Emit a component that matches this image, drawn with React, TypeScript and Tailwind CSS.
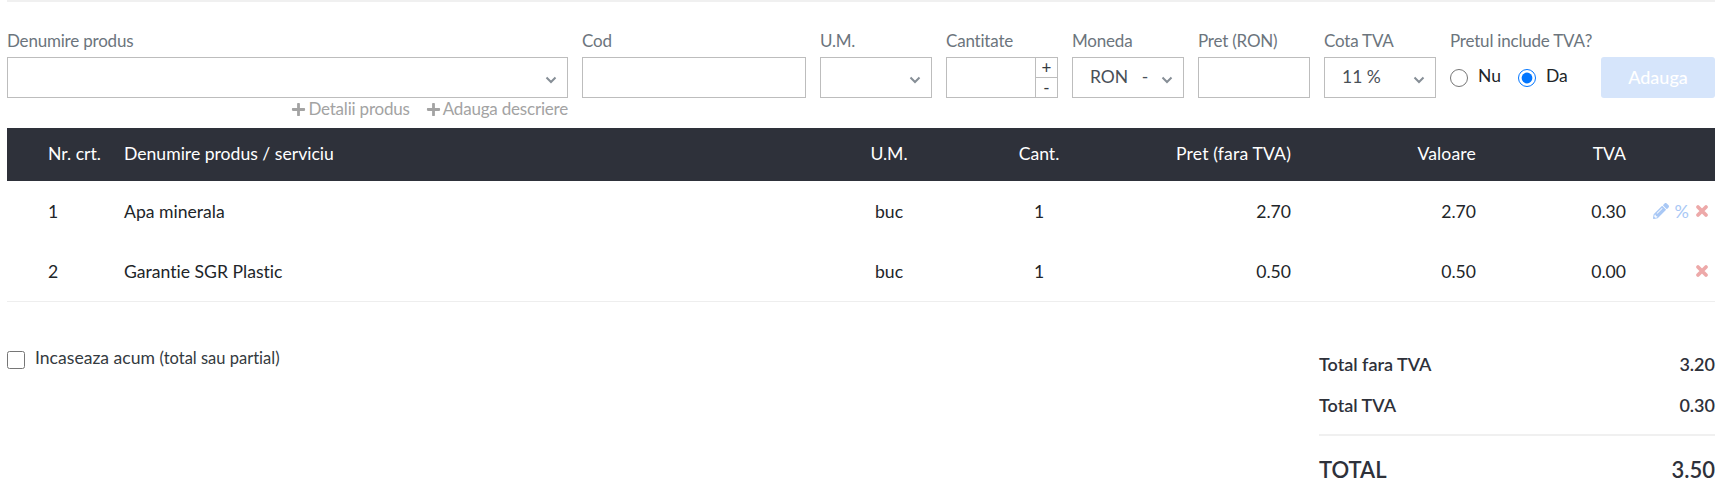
import { FaPencilAlt, FaPlus } from "react-icons/fa";

const rows = [
  { nr: 1, name: "Apa minerala", um: "buc", qty: 1, price: "2.70", value: "2.70", vat: "0.30", editable: true },
  { nr: 2, name: "Garantie SGR Plastic", um: "buc", qty: 1, price: "0.50", value: "0.50", vat: "0.00", editable: false },
];

const gridCols = "grid grid-cols-[117px_690px_150px_150px_177px_185px_150px_89px] items-center";

function Chevron() {
  return (
    <svg width="12" height="8" viewBox="0 0 12 8" className="shrink-0 translate-y-[2px] text-[#868e96]">
      <path d="M1.500 1.500 6 6l4.500-4.500" fill="none" stroke="currentColor" strokeWidth="2" />
    </svg>
  );
}

function Label({ children }: { children: React.ReactNode }) {
  return (
    <div className="mb-[4px] h-[24px] whitespace-nowrap text-[17px] leading-[24px] tracking-[-0.2px] text-[#6c757d]">
      {children}
    </div>
  );
}

function SelectBox({ value }: { value?: string }) {
  return (
    <div className="flex h-[41px] items-center justify-between border border-[#bdbdbd] pl-[17px] pr-[10px] text-[17.500px] text-[#495057]">
      <span className="whitespace-pre">{value}</span>
      <Chevron />
    </div>
  );
}

function TextBox() {
  return <input className="block h-[41px] w-full border border-[#bdbdbd] bg-white px-3 text-[16px] outline-none" />;
}

function Radio({ label, checked }: { label: string; checked?: boolean }) {
  return (
    <label className="flex items-center gap-[10px] text-[17.500px] leading-[24px] text-[#212529]">
      <input type="radio" name="vat" defaultChecked={checked} className="m-0 h-[18px] w-[18px]" />
      <span className="-translate-y-[2px]">{label}</span>
    </label>
  );
}

function AddLink({ label }: { label: string }) {
  return (
    <span className="flex items-center gap-[2px]">
      <FaPlus className="text-[15px]" />
      {label}
    </span>
  );
}

function CloseIcon() {
  return (
    <svg width="14" height="14" viewBox="0 0 14 14" className="text-[#eda9a9]">
      <path d="M3 3l8 8M11 3l-8 8" fill="none" stroke="currentColor" strokeWidth="3.800" strokeLinecap="round" />
    </svg>
  );
}

export default function App() {
  return (
    <div className="h-[492px] w-[1726px] overflow-hidden bg-white pl-[7px] pr-[11px] font-['Lato',sans-serif] text-[#212529] [font-variant-ligatures:none]">
      <div className="h-[2px] bg-[#f0f0f0]" />

      <div className="mt-[27px] flex gap-[14px]">
        <div className="w-[561px]">
          <Label>Denumire produs</Label>
          <SelectBox />
          <div className="flex h-[22px] items-center justify-end gap-[16px] text-[17px] tracking-[-0.2px] text-[#a3a3a3]">
            <AddLink label="Detalii produs" />
            <AddLink label="Adauga descriere" />
          </div>
        </div>
        <div className="w-[224px]">
          <Label>Cod</Label>
          <TextBox />
        </div>
        <div className="w-[112px]">
          <Label>U.M.</Label>
          <SelectBox />
        </div>
        <div className="w-[112px]">
          <Label>Cantitate</Label>
          <div className="flex h-[41px] border border-[#bdbdbd]">
            <input className="min-w-0 flex-1 bg-white outline-none" />
            <div className="flex w-[22px] flex-col border-l border-[#bdbdbd] text-center text-[17px] leading-[19px] text-[#343a40]">
              <span className="h-[20px] border-b border-[#bdbdbd]">+</span>
              <span className="flex-1">-</span>
            </div>
          </div>
        </div>
        <div className="w-[112px]">
          <Label>Moneda</Label>
          <SelectBox value="RON   -" />
        </div>
        <div className="w-[112px]">
          <Label>Pret (RON)</Label>
          <TextBox />
        </div>
        <div className="w-[112px]">
          <Label>Cota TVA</Label>
          <SelectBox value="11 %" />
        </div>
        <div className="w-[137px]">
          <Label>Pretul include TVA?</Label>
          <div className="flex h-[41px] items-center gap-[17px]">
            <Radio label="Nu" />
            <Radio label="Da" checked />
          </div>
        </div>
        <div className="w-[114px] pt-[28px]">
          <button className="h-[41px] w-full rounded-[3px] bg-[#d6e5fb] text-[18px] font-medium text-white">Adauga</button>
        </div>
      </div>

      <div className={`${gridCols} mt-[8px] h-[53px] bg-[#2e313a] text-[17.600px] text-white`}>
        <div className="pl-[41px]">Nr. crt.</div>
        <div>Denumire produs / serviciu</div>
        <div className="text-center">U.M.</div>
        <div className="text-center">Cant.</div>
        <div className="text-right tracking-[0.15px]">Pret (fara TVA)</div>
        <div className="text-right tracking-[0.15px]">Valoare</div>
        <div className="text-right">TVA</div>
        <div />
      </div>

      <div className="border-b border-[#eeeeee]">
        {rows.map((r) => (
          <div key={r.nr} className={`${gridCols} h-[60px] pt-[2px] text-[17.600px]`}>
            <div className="pl-[41px]">{r.nr}</div>
            <div>{r.name}</div>
            <div className="text-center">{r.um}</div>
            <div className="text-center">{r.qty}</div>
            <div className="text-right">{r.price}</div>
            <div className="text-right">{r.value}</div>
            <div className="text-right">{r.vat}</div>
            <div className="flex -translate-y-[1px] items-center justify-end gap-[6px] pr-[6px]">
              {r.editable && (
                <>
                  <FaPencilAlt className="text-[16px] text-[#a9c8f5]" />
                  <span className="text-[18px] leading-none text-[#a9c8f5]">%</span>
                </>
              )}
              <CloseIcon />
            </div>
          </div>
        ))}
      </div>

      <div className="mt-[45px] flex items-start justify-between">
        <label className="flex items-center gap-[10px] text-[17.600px] text-[#343a40]">
          <input type="checkbox" className="m-0 h-[18px] w-[18px]" />
          <span className="-translate-y-[2px]">
            Incaseaza acum <span className="text-[16.500px]">(total sau partial)</span>
          </span>
        </label>
        <div className="-mt-[3px] w-[396px] text-[#2e313a]">
          <div className="flex h-[41px] items-center justify-between text-[18px] font-semibold">
            <span>Total fara TVA</span>
            <span>3.20</span>
          </div>
          <div className="flex h-[41px] items-center justify-between text-[18px] font-semibold">
            <span>Total TVA</span>
            <span>0.30</span>
          </div>
          <div className="mt-[8px] flex h-[68px] items-center justify-between border-t-2 border-[#f0f0f0] text-[22px] font-semibold">
            <span>TOTAL</span>
            <span>3.50</span>
          </div>
        </div>
      </div>
    </div>
  );
}
